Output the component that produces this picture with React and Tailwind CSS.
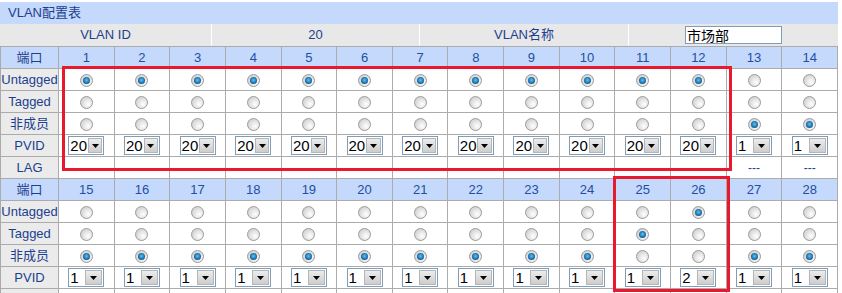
import React from 'react'

const font = { fontFamily: '"Liberation Sans", "Noto Sans CJK SC", sans-serif' }

const blocks = [
  {
    ports: [1, 2, 3, 4, 5, 6, 7, 8, 9, 10, 11, 12, 13, 14],
    mode: ['u', 'u', 'u', 'u', 'u', 'u', 'u', 'u', 'u', 'u', 'u', 'u', 'n', 'n'],
    pvid: ['20', '20', '20', '20', '20', '20', '20', '20', '20', '20', '20', '20', '1', '1'],
    lag: ['', '', '', '', '', '', '', '', '', '', '', '', '---', '---'],
    lagLabel: 'LAG',
  },
  {
    ports: [15, 16, 17, 18, 19, 20, 21, 22, 23, 24, 25, 26, 27, 28],
    mode: ['n', 'n', 'n', 'n', 'n', 'n', 'n', 'n', 'n', 'n', 't', 'u', 'n', 'n'],
    pvid: ['1', '1', '1', '1', '1', '1', '1', '1', '1', '1', '1', '2', '1', '1'],
    // last row falls below the visible area
    lag: ['', '', '', '', '', '', '', '', '', '', '', '', '', ''],
    lagLabel: '',
  },
]

function Radio({ on }) {
  return (
    <span className="inline-flex w-[13px] h-[13px] rounded-full border border-[#9c9c9c] bg-[radial-gradient(circle_at_65%_65%,#ffffff,#c4c4c4)] items-center justify-center align-middle">
      {on && <span className="block w-[7px] h-[7px] rounded-full bg-[radial-gradient(circle_at_50%_45%,#5fc3f0,#0d5d9a_70%,#083f6e)]" />}
    </span>
  )
}

function Select({ value }) {
  return (
    <span className="inline-flex w-[36px] h-[19px] border border-[#7f9db9] bg-white align-middle items-stretch">
      <span className="flex-1 text-[15px] leading-[17px] text-black pl-[1px] text-left">{value}</span>
      <span className="w-[17px] m-[1px] border border-[#b5b5b5] bg-[linear-gradient(#ececec,#cdcdcd)] flex items-center justify-center">
        <svg width="7" height="4" viewBox="0 0 7 4"><path d="M0 0h7L3.5 4z" fill="#000" /></svg>
      </span>
    </span>
  )
}

const td = 'border border-[#ababab] h-[22px] p-0 text-center leading-[16px]'
const lab = td + ' bg-[#ebebeb] text-[13px] text-[#1c3f8f]'

function Block({ b }) {
  return (
    <>
      <tr className="bg-[#c4d9fb]">
        <td className={td + ' text-[13px] text-[#1c3f8f]'}>端口</td>
        {b.ports.map((p) => (
          <td key={p} className={td + ' text-[13px] text-[#1f4ea3]'}>{p}</td>
        ))}
      </tr>
      <tr className="bg-white">
        <td className={lab}>Untagged</td>
        {b.mode.map((m, i) => <td key={i} className={td}><Radio on={m === 'u'} /></td>)}
      </tr>
      <tr className="bg-white">
        <td className={lab}>Tagged</td>
        {b.mode.map((m, i) => <td key={i} className={td}><Radio on={m === 't'} /></td>)}
      </tr>
      <tr className="bg-white">
        <td className={lab}>非成员</td>
        {b.mode.map((m, i) => <td key={i} className={td}><Radio on={m === 'n'} /></td>)}
      </tr>
      <tr className="bg-white">
        <td className={lab}>PVID</td>
        {b.pvid.map((v, i) => <td key={i} className={td}><Select value={v} /></td>)}
      </tr>
      <tr className="bg-white">
        <td className={lab}>{b.lagLabel}</td>
        {b.lag.map((v, i) => <td key={i} className={td + ' text-[12px] text-[#1c3f8f]'}>{v}</td>)}
      </tr>
    </>
  )
}

export default function App() {
  return (
    <div className="relative w-[842px] h-[293px] overflow-hidden bg-white" style={font}>
      <div className="w-[838px] pt-[2px]">
        <div className="h-[22px] bg-[#c4d9fb] text-[13px] text-[#1c3f8f] pl-[8px] leading-[22px]">VLAN配置表</div>
        <div className="h-[22px] bg-[#e8e8e8] flex text-[13px] text-[#1c3f8f]">
          <div className="w-[212px] border-r border-white flex items-center justify-center">VLAN ID</div>
          <div className="w-[208px] border-r border-white flex items-center justify-center">20</div>
          <div className="w-[209px] border-r border-white flex items-center justify-center">VLAN名称</div>
          <div className="flex-1 flex items-center justify-center">
            <input
              readOnly
              value="市场部"
              className="w-[97px] h-[18px] border border-[#7f9db9] bg-white text-[14px] text-black px-[1px] leading-[16px] outline-none"
              style={font}
            />
          </div>
        </div>
        <table className="w-[838px] table-fixed border-collapse">
          <colgroup>
            <col className="w-[58px]" />
          </colgroup>
          <tbody>
            {blocks.map((b, i) => <Block key={i} b={b} />)}
          </tbody>
        </table>
      </div>
      <div className="absolute left-[62px] top-[66px] w-[670px] h-[105px] border-[3px] border-[#e8192c]" />
      <div className="absolute left-[613px] top-[176px] w-[117px] h-[116px] border-[3px] border-[#e8192c]" />
    </div>
  )
}
